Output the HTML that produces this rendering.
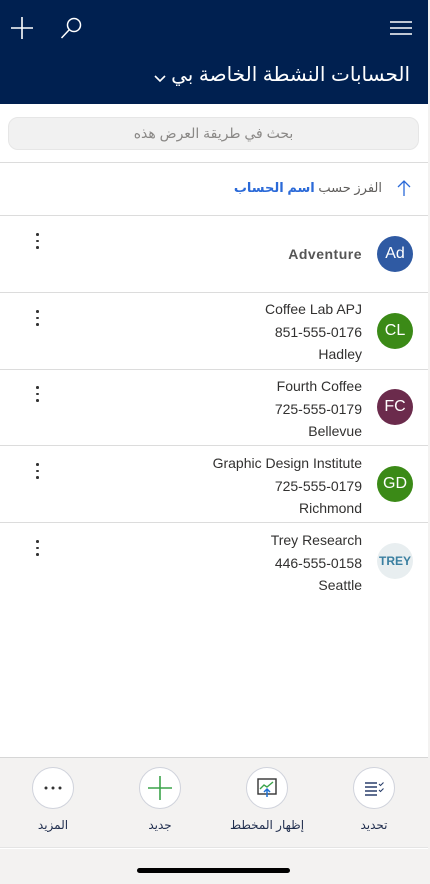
<!DOCTYPE html>
<html><head><meta charset="utf-8"><style>
*{margin:0;padding:0;box-sizing:border-box}
body{width:430px;height:884px;background:#f3f2f1;font-family:"Liberation Sans","DejaVu Sans",sans-serif;position:relative;overflow:hidden}
#page{position:absolute;left:0;top:0;width:428px;height:884px;background:#fff}
.hdr{position:absolute;left:0;top:0;width:428px;height:104px;background:#002050}
.title{position:absolute;right:18px;top:62px;color:#fff;font-size:20px;font-weight:normal;direction:rtl;white-space:nowrap}
.search{position:absolute;left:8px;top:117px;width:411px;height:33px;background:#f1f1f1;border-radius:10px;border:1px solid #e6e6e6;text-align:center;color:#8a8886;font-size:14px;line-height:31px;direction:rtl}
.hr{position:absolute;left:0;width:428px;height:1px;background:#dcdcdc}
.sort{position:absolute;right:46px;top:180px;font-size:13px;color:#605e5c;direction:rtl}
.sort b{color:#2b6ad8}
.av{position:absolute;left:377px;width:36px;height:36px;border-radius:50%;color:#fff;font-size:16px;text-align:center;line-height:36px}
.txt{position:absolute;right:66px;text-align:right;font-size:14px;color:#323130;line-height:22.5px;white-space:nowrap}
.dots{position:absolute;left:36px;width:3px}
.dots i{display:block;width:2.5px;height:2.5px;background:#333;border-radius:50%;margin-bottom:4px}
.bar{position:absolute;left:0;top:757px;width:428px;height:91px;background:#f3f2f1;border-top:1px solid #d6d6d6;border-bottom:1px solid #e4e4e4}
.btn{position:absolute;top:9px;width:42px;height:42px;border-radius:50%;background:#fff;border:1px solid #d0d3dc}
.lbl{position:absolute;top:60px;width:100px;text-align:center;font-size:12px;color:#1f2d4d}
.home{position:absolute;left:137px;top:868px;width:153px;height:5px;border-radius:3px;background:#000}
</style></head><body>
<div id="page">
<div class="hdr">
<svg style="position:absolute;left:10px;top:16px" width="24" height="24"><path d="M12 1v22M1 12h22" stroke="#fff" stroke-width="1.6"/></svg>
<svg style="position:absolute;left:60px;top:16px" width="24" height="24"><circle cx="14" cy="9" r="6.5" stroke="#fff" stroke-width="1.5" fill="none"/><path d="M9.5 13.5L1.5 22" stroke="#fff" stroke-width="1.5"/></svg>
<svg style="position:absolute;left:390px;top:20px" width="22" height="16"><path d="M0 2h22M0 8h22M0 14h22" stroke="#fff" stroke-width="1.5"/></svg>
<div class="title">الحسابات النشطة الخاصة بي</div>
<svg style="position:absolute;left:154px;top:75px;z-index:2" width="12" height="8"><path d="M1 1l5 5 5-5" stroke="#fff" stroke-width="1.6" fill="none"/></svg>
</div>
<div class="search">بحث في طريقة العرض هذه</div>
<div class="hr" style="top:162px"></div>
<svg style="position:absolute;left:397px;top:180px" width="14" height="16"><path d="M7 1v15M1 7l6-6 6 6" stroke="#2b6ad8" stroke-width="1.3" fill="none"/></svg>
<div class="sort">الفرز حسب <b>اسم الحساب</b></div>
<div class="hr" style="top:215px"></div>

<div class="av" style="top:236px;background:#2f5aa3">Ad</div>
<div class="txt" style="top:243px;color:#555;font-weight:bold;letter-spacing:.5px">Adventure</div>
<div class="dots" style="top:233px"><i></i><i></i><i></i></div>
<div class="hr" style="top:292px"></div>

<div class="av" style="top:313px;background:#3b8a17">CL</div>
<div class="txt" style="top:298px">Coffee Lab APJ<br>851-555-0176<br>Hadley</div>
<div class="dots" style="top:310px"><i></i><i></i><i></i></div>
<div class="hr" style="top:369px"></div>

<div class="av" style="top:389px;background:#6b2b4c">FC</div>
<div class="txt" style="top:375px">Fourth Coffee<br>725-555-0179<br>Bellevue</div>
<div class="dots" style="top:386px"><i></i><i></i><i></i></div>
<div class="hr" style="top:445px"></div>

<div class="av" style="top:466px;background:#3b8a17">GD</div>
<div class="txt" style="top:452px">Graphic Design Institute<br>725-555-0179<br>Richmond</div>
<div class="dots" style="top:463px"><i></i><i></i><i></i></div>
<div class="hr" style="top:522px"></div>

<div class="av" style="top:543px;background:#e8eef0;color:#3a7fa0;font-size:12px;font-weight:bold;overflow:hidden">TREY</div>
<div class="txt" style="top:529px">Trey Research<br>446-555-0158<br>Seattle</div>
<div class="dots" style="top:540px"><i></i><i></i><i></i></div>

<div class="bar">
<div class="btn" style="left:32px"><svg width="42" height="42" style="position:absolute;left:-1px;top:-1px"><circle cx="14" cy="21" r="1.5" fill="#333"/><circle cx="21" cy="21" r="1.5" fill="#333"/><circle cx="28" cy="21" r="1.5" fill="#333"/></svg></div>
<div class="btn" style="left:139px"><svg width="42" height="42" style="position:absolute;left:-1px;top:-1px"><path d="M21 9v24M9 21h24" stroke="#3ba34a" stroke-width="1.6"/></svg></div>
<div class="btn" style="left:246px"><svg width="42" height="42" style="position:absolute;left:-1px;top:-1px"><rect x="12" y="12" width="18" height="15" fill="none" stroke="#333" stroke-width="1.4"/><path d="M14 22l4-4 3 2 6-5" stroke="#3ba34a" stroke-width="1.4" fill="none"/><path d="M21 30v-8M18 25l3-3 3 3" stroke="#1c6fd1" stroke-width="1.5" fill="none"/></svg></div>
<div class="btn" style="left:353px"><svg width="42" height="42" style="position:absolute;left:-1px;top:-1px"><path d="M12 16h12M12 20h12M12 24h12M12 28h12" stroke="#2a3f6b" stroke-width="1.6"/><path d="M26 17l1.5 1.5 3-3M26 23l1.5 1.5 3-3" stroke="#2a3f6b" stroke-width="1.1" fill="none"/></svg></div>
<div class="lbl" style="left:3px">المزيد</div>
<div class="lbl" style="left:110px">جديد</div>
<div class="lbl" style="left:217px">إظهار المخطط</div>
<div class="lbl" style="left:324px">تحديد</div>
</div>
<div style="position:absolute;left:0;top:849px;width:428px;height:35px;background:#f3f2f1"></div>
<div class="home"></div>
</div>
</body></html>
